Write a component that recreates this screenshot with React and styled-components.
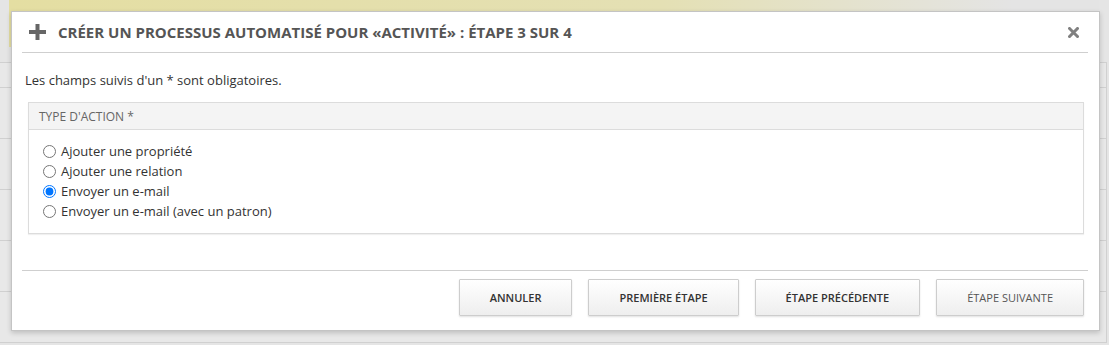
import React, { useState } from 'react';
import styled, { createGlobalStyle } from 'styled-components';

const GlobalStyle = createGlobalStyle`
  html, body {
    margin: 0;
    padding: 0;
    background: #e5e5e5;
    font-family: "Open Sans", "Liberation Sans", sans-serif;
  }
`;

const Page = styled.div`
  position: relative;
  width: 1109px;
  height: 345px;
  overflow: hidden;
  background: #e5e5e5;
`;

const Notice = styled.div`
  margin-left: 9px;
  width: 1090px;
  height: 47px;
  background: linear-gradient(90deg, #e4dea2 0%, #e4e0b4 60%, #e4e4e4 92%);
`;

const Rows = styled.div`
  margin-top: 15px;
  width: 1106px;
  border-top: 1px solid #d0d0d0;
  border-right: 1px solid #d0d0d0;
`;

const Row = styled.div`
  height: ${p => p.$h}px;
  border-bottom: 1px solid #d0d0d0;
  background: #e8e8e8;
`;

const Dialog = styled.div`
  position: absolute;
  left: 11px;
  top: 11px;
  width: 1089px;
  box-sizing: border-box;
  background: #fff;
  border: 1px solid #c4c4c4;
  box-shadow: 0 2px 5px rgba(0, 0, 0, 0.18);
  display: flex;
  flex-direction: column;
`;

const Header = styled.div`
  margin: 0 11px 0 10px;
  height: 40px;
  padding: 0 9px 0 7px;
  border-bottom: 1px solid #cfcfcf;
  display: flex;
  align-items: center;
  gap: 12px;
`;

const Title = styled.h1`
  flex: 1;
  margin: 0;
  font-size: 15px;
  font-weight: 700;
  color: #555;
  text-transform: uppercase;
`;

const CloseButton = styled.button`
  border: none;
  background: none;
  padding: 0;
  width: 12px;
  height: 12px;
  display: flex;
  align-items: center;
  justify-content: center;
  cursor: pointer;
`;

const Body = styled.div`
  padding: 18px 15px 36px 13px;
`;

const Intro = styled.p`
  margin: 0 0 13px;
  font-size: 13px;
  line-height: 18px;
  color: #333;
`;

const Panel = styled.fieldset`
  margin: 0 0 0 3px;
  padding: 0;
  border: 1px solid #dcdcdc;
  box-shadow: 0 1px 1px rgba(0, 0, 0, 0.06);
`;

const PanelHeader = styled.div`
  height: 26px;
  padding: 0 10px;
  display: flex;
  align-items: center;
  background: #f4f4f4;
  border-bottom: 1px solid #dcdcdc;
  font-size: 12px;
  color: #666;
  text-transform: uppercase;
`;

const OptionList = styled.div`
  padding: 11px 14px 12px;
  display: flex;
  flex-direction: column;
`;

const Option = styled.label`
  height: 20px;
  display: flex;
  align-items: center;
  gap: 5px;
  font-size: 13px;
  color: #333;
  cursor: pointer;

  input {
    margin: 0;
    width: 13px;
    height: 13px;
  }
`;

const Footer = styled.div`
  margin: 0 11px 0 10px;
  padding: 8px 4px 14px;
  border-top: 1px solid #cfcfcf;
  display: flex;
  justify-content: flex-end;
  gap: 16px;
`;

const Button = styled.button`
  height: 37px;
  padding: 0 30px;
  border: 1px solid #cdcdcd;
  border-radius: 1px;
  background: linear-gradient(#ffffff, #eeeeee);
  box-shadow: 0 1px 2px rgba(0, 0, 0, 0.12);
  font-family: "Open Sans", "Liberation Sans", sans-serif;
  font-size: 11px;
  font-weight: ${p => (p.disabled ? 400 : 600)};
  color: ${p => (p.disabled ? '#555' : '#333')};
  text-transform: uppercase;
  cursor: ${p => (p.disabled ? 'default' : 'pointer')};
`;

const PlusIcon = () => (
  <svg width="17" height="16" viewBox="0 0 17 16">
    <path d="M6.5 0h4v6h6.5v4h-6.5v6h-4v-6h-6.5v-4h6.5z" fill="#666" />
  </svg>
);

const CloseIcon = () => (
  <svg width="11" height="11" viewBox="0 0 11 11">
    <path d="M1.5 1.5l8 8M9.5 1.5l-8 8" stroke="#808080" strokeWidth="3" strokeLinecap="square" />
  </svg>
);

const options = [
  'Ajouter une propriété',
  'Ajouter une relation',
  'Envoyer un e-mail',
  'Envoyer un e-mail (avec un patron)',
];

const App = () => {
  const [action, setAction] = useState(2);

  return (
    <Page>
      <GlobalStyle />
      <Notice />
      <Rows>
        <Row $h={24} />
        <Row $h={50} />
        <Row $h={50} />
        <Row $h={50} />
        <Row $h={50} />
        <Row $h={50} />
      </Rows>

      <Dialog role="dialog">
        <Header>
          <PlusIcon />
          <Title>Créer un processus automatisé pour «Activité» : étape 3 sur 4</Title>
          <CloseButton aria-label="Fermer">
            <CloseIcon />
          </CloseButton>
        </Header>

        <Body>
          <Intro>Les champs suivis d'un * sont obligatoires.</Intro>
          <Panel>
            <PanelHeader>Type d'action *</PanelHeader>
            <OptionList>
              {options.map((label, i) => (
                <Option key={label}>
                  <input
                    type="radio"
                    name="action"
                    checked={action === i}
                    onChange={() => setAction(i)}
                  />
                  {label}
                </Option>
              ))}
            </OptionList>
          </Panel>
        </Body>

        <Footer>
          <Button>Annuler</Button>
          <Button>Première étape</Button>
          <Button>Étape précédente</Button>
          <Button disabled>Étape suivante</Button>
        </Footer>
      </Dialog>
    </Page>
  );
};

export default App;
